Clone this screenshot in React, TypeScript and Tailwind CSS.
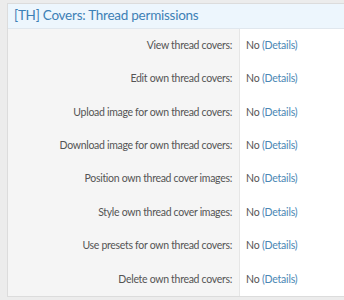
const permissions = [
  "View thread covers:",
  "Edit own thread covers:",
  "Upload image for own thread covers:",
  "Download image for own thread covers:",
  "Position own thread cover images:",
  "Style own thread cover images:",
  "Use presets for own thread covers:",
  "Delete own thread covers:",
];

export default function App() {
  return (
    <div className="w-[344px] h-[300px] overflow-hidden bg-[#ececec] pl-[7px] pt-[3px] font-['Lato',sans-serif]">
      <div className="w-[350px] border border-[#dcdcdc] border-r-0 bg-white">
        {/* Header */}
        <div className="h-[25px] flex items-center px-[6px] bg-[#edf6fd] border-b border-[#e0e7ee]">
          <h2 className="text-[13.5px] tracking-[-0.25px] text-[#3d81b6] leading-none">
            [TH] Covers: Thread permissions
          </h2>
        </div>

        {/* Rows */}
        <div className="flex flex-col">
          {permissions.map((label, i) => (
            <div key={i} className="flex h-[33.4px]">
              <div className="w-[232px] shrink-0 bg-[#f5f5f5] border-r border-[#e6e6e6] flex items-center justify-end pr-[7px] text-[10.5px] tracking-[-0.3px] text-[#545454]">
                {label}
              </div>
              <div className="flex items-center pl-[6px] text-[10.5px] tracking-[-0.2px] text-[#545454]">
                No&nbsp;<span className="text-[#4a86b4]">(Details)</span>
              </div>
            </div>
          ))}
        </div>
      </div>
    </div>
  );
}
